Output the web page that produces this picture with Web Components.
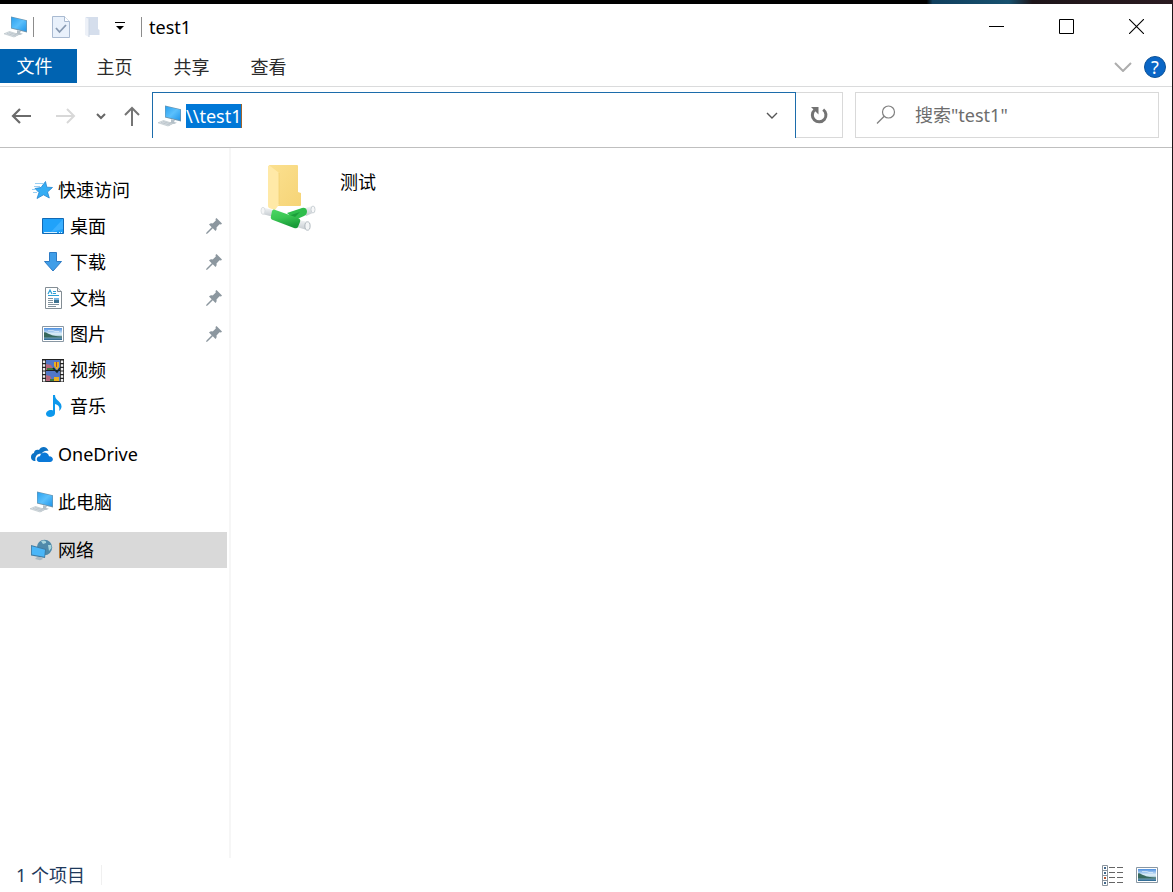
<!DOCTYPE html>
<html lang="zh-CN">
<head>
<meta charset="utf-8">
<title>test1</title>
<style>
html, body { height: 100%; margin: 0; }
body { background: #fff; color: #000; font: 18px/24px "Noto Sans", "Noto Sans CJK SC", sans-serif; overflow: hidden; }
</style>
</head>
<body>
<explorer-window></explorer-window>
<script>
const pc = `<svg viewBox="0 0 24 22" width="24" height="22"><defs><linearGradient id="s" x1="0" y1="0" x2="1" y2="1"><stop offset="0" stop-color="#2ba0ee"/><stop offset=".5" stop-color="#5bc0fc"/><stop offset="1" stop-color="#2196ea"/></linearGradient></defs><path d="M7 .5 23 4.200V16.500L7 12.500z" fill="#6d94ad"/><path d="M7.500 1.300 22.300 4.800v10.500L7.500 11.700z" fill="url(#s)"/><path d="M13 14.200l4 1-1 1.800 3 .8-3 1.200-5-1.300 2-.8z" fill="#b4c0c8"/><path d="M0 17.800 5.500 15.500 15 18.500l-5 2.500z" fill="#dbe1e5" stroke="#b4bfc5" stroke-width=".6"/><path d="m3 17.500 9 2.600M5 16.600l8.500 2.500" stroke="#a8b4bc" stroke-width=".6"/></svg>`;
const picture = `<svg viewBox="0 0 22 16" width="22" height="16"><defs><linearGradient id="g" x2="0" y2="1"><stop offset="0" stop-color="#4c8fe0"/><stop offset=".5" stop-color="#e2f2fa"/><stop offset=".7" stop-color="#9cc0d2"/><stop offset="1" stop-color="#24628e"/></linearGradient></defs><path d="M.5.5h21v15H.5z" fill="#fff" stroke="#8997a3"/><path d="M2 2h18v12H2z" fill="url(#g)"/><path d="M2 6.500c2-1 3 1 5 1.500s3 1.800 9 2.300l4 .2v1H2z" fill="#37695d"/><path d="M6 4.500h5l2 1h4" fill="none" stroke="#fff" opacity=".5"/></svg>`;
const icons = {
  pc, picture,
  check: `<svg viewBox="0 0 18 22" width="18" height="22"><path d="M.5.5h12l5 5v16H.5z" fill="#e9f1fb" stroke="#a9bad1"/><path d="M12.500.5v5h5" fill="#fff" stroke="#a9bad1"/><path d="m4 12 3.500 4 6.500-7" fill="none" stroke="#8799b1" stroke-width="1.800"/></svg>`,
  newfolder: `<svg viewBox="0 0 15 22" width="15" height="22"><path d="M1 1h12v12l1.500 1v5H1z" fill="#d5deec"/><path d="m0 1 4 2v18l-4-2z" fill="#edf1f8"/><path d="M4 3v18" stroke="#ccd6e4"/></svg>`,
  drop: `<svg viewBox="0 0 10 9" width="10" height="9"><path d="M0 .5h10" stroke="#000"/><path d="M1 4h8L5 8z"/></svg>`,
  min: `<svg viewBox="0 0 15 15" width="15" height="15"><path d="M0 7.500h15" stroke="#000"/></svg>`,
  max: `<svg viewBox="0 0 15 15" width="15" height="15"><path d="M.5.5h14v14H.5z" fill="none" stroke="#000"/></svg>`,
  close: `<svg viewBox="0 0 15 15" width="15" height="15"><path d="m0 0 15 15M15 0 0 15" stroke="#000" stroke-width="1.100"/></svg>`,
  expand: `<svg viewBox="0 0 18 10" width="18" height="10"><path d="m1 1 8 8 8-8" fill="none" stroke="#adadad" stroke-width="2"/></svg>`,
  back: `<svg viewBox="0 0 20 16" width="20" height="16"><path d="M20 8H2M9 1 2 8l7 7" fill="none" stroke="#6b6b6b" stroke-width="2.200"/></svg>`,
  forward: `<svg viewBox="0 0 20 16" width="20" height="16"><path d="M0 8h18M11 1l7 7-7 7" fill="none" stroke="#d8d8d8" stroke-width="2"/></svg>`,
  recent: `<svg viewBox="0 0 10 7" width="10" height="7"><path d="m1 1 4 4 4-4" fill="none" stroke="#666" stroke-width="2"/></svg>`,
  up: `<svg viewBox="0 0 16 20" width="16" height="20"><path d="M8 20V2M1 9l7-7 7 7" fill="none" stroke="#757575" stroke-width="2"/></svg>`,
  chev: `<svg viewBox="0 0 12 8" width="12" height="8"><path d="m1 1 5 5 5-5" fill="none" stroke="#555" stroke-width="1.400"/></svg>`,
  refresh: `<svg viewBox="0 0 18 18" width="18" height="18"><path d="M13.200 3.600A6.800 6.800 0 1 1 4.600 4" fill="none" stroke="#737373" stroke-width="3"/><path d="M1 1h7.500v7.500z" fill="#737373"/></svg>`,
  search: `<svg viewBox="0 0 20 20" width="20" height="20"><circle cx="12.500" cy="7" r="6" fill="none" stroke="#808080" stroke-width="1.200"/><path d="M8.200 11.300 1 18.500" stroke="#808080" stroke-width="1.300"/></svg>`,
  star: `<svg viewBox="0 0 22 20" width="22" height="20"><path d="m14.500 1.500 1.300 5.700 5.700.3-5 4.500 1.800 6-5.800-3.200L6 18.500l2-6-4-4 6-1z" fill="#35adf4" stroke="#2384cf" stroke-width=".8"/><path d="M4 3.500h8M3 6.500h6M1 9.500h4M2 12.500h4" stroke="#8fc9f0" stroke-width=".9"/></svg>`,
  desktop: `<svg viewBox="0 0 22 16" width="22" height="16"><path d="M.5.5h21v15H.5z" fill="#20a2fa" stroke="#1269b4"/><path d="M21 1v10L9 14z" fill="#3bb0ff"/><path d="M2 14.500h13M17 14.500h1M19 14.500h1" stroke="#d8f1ff"/></svg>`,
  download: `<svg viewBox="0 0 18 20" width="18" height="20"><path d="M5.500.5h7v9h5L9 19 .5 9.500h5z" fill="#409ee8" stroke="#2d7bc4"/></svg>`,
  document: `<svg viewBox="0 0 17 22" width="17" height="22"><path d="M.5.500h12l4 4v17H.5z" fill="#fff" stroke="#838d94"/><path d="M12.500.500v4h4" fill="#edf0f2" stroke="#838d94"/><path d="m3 7 2-4 2 4M8 4.500h3M8 6.500h3M3 8.500h11" fill="none" stroke="#2fa0d5" stroke-width="1.200"/><path d="M3 11.500h5M3 13.500h5M3 15.500h5M3 17.500h11M3 19.500h8" stroke="#83939e"/><path d="M9 11h5v5H9z" fill="#3e7290"/><path d="M9 11h5v2H9z" fill="#77b7e3"/></svg>`,
  video: `<svg viewBox="0 0 22 23" width="22" height="23"><path d="M0 0h22v23H0z" fill="#222"/><path d="M4 1h14v10H4zM4 12h14v10H4z" fill="#5278c8"/><path d="M4 5l5 1 3 5H4zM4 16l4 1 3 5H4z" fill="#b5687c"/><path d="M5 9h8v2H5zM8 20h9v2H8z" fill="#397b43"/><path d="M12 3h5v5l-2 3-3-4zM12 18h5v4h-5z" fill="#e8b021"/><path d="M14.500 3v5" stroke="#b24830"/><path d="m11 9 4 4 3-4" fill="none" stroke="#152a2b" stroke-width="1.500"/><path d="M2 1.500V23M20 1.500V23" stroke="#eee" stroke-width="2.400" stroke-dasharray="2.500 1.200"/></svg>`,
  music: `<svg viewBox="0 0 17 22" width="17" height="22"><path d="M8 0h2c0 6 7 6 6.500 12-.2 2-1.500 3-2.500 4 1-4 0-6-4-7v9c0 5-9 5-9 1 0-3 4-5 7-3.500z" fill="#0d98ec"/></svg>`,
  onedrive: `<svg viewBox="0 0 22 15" width="22" height="15"><path d="M4.500 14C1 14 0 12 0 10s1-3.500 3-4c0-3 3-4 5-3 2-4 8-4 9.500 1-3-1-6 .5-7 3C7 6 3.500 9 4.500 14z" fill="#0c72c5"/><path d="M8.500 15C4.500 15 5 9 9 9.200c1-5 8-5 9 0 5 0 5 5.800 1 5.800z" fill="#0a79d8"/></svg>`,
  network: `<svg viewBox="0 0 22 22" width="22" height="22"><circle cx="13.500" cy="8.500" r="7.700" fill="#4f8aaa"/><path d="M10 2c3-1.500 6 0 5 2l-3 1zM17 6l3 0 .5 3-2.500 3z" fill="#a8d5dd"/><path d="m0 6 15 4-1 9-14-2.500z" fill="#3f7ca4"/><path d="m.8 7.200 13.200 3.600-.7 7L.8 15.500z" fill="#4ab6f8"/><path d="M6 18h4l2 2-3 1.200L4 20z" fill="#a8b9c3"/></svg>`,
  pin: `<svg viewBox="0 0 16 16" width="16" height="16"><path d="m9.500 1 1-1L16 5.500l-1 1-1.500-.3-3 3.300c.4 1.500 0 2.500-1 3.500L6.800 10.300 1.500 15.500 0 16l.5-1.500 5.200-5.300L3 6.500c1-1 2.300-1.400 3.700-1L9.800 2.500z" fill="#8c979f"/></svg>`,
  share: `<svg viewBox="0 0 56 68" width="56" height="68"><defs><linearGradient id="f" x2="1" y2="1"><stop offset="0" stop-color="#fbe08f"/><stop offset="1" stop-color="#f6d477"/></linearGradient><linearGradient id="t" x2=".3" y2="1"><stop offset="0" stop-color="#4bd764"/><stop offset=".5" stop-color="#3ac653"/><stop offset="1" stop-color="#189b38"/></linearGradient><linearGradient id="w" x2="0" y2="1"><stop offset="0" stop-color="#f4f6f7"/><stop offset="1" stop-color="#c3c9ce"/></linearGradient></defs><path d="M9 1h28q1 0 1 1v26l3 1v12q0 1-1 1H18z" fill="url(#f)"/><path d="M8 2q1-1 2 0l8 6q1 1 1 2v29q0 2-1 3l-3 4-6-2q-1-1-1-2z" fill="#ffe9a7"/><path d="M19 9v31" stroke="#f2d071" stroke-width=".8"/><path d="m3 43.500 12 3-3 6-10-2.500z" fill="url(#w)"/><ellipse cx="3" cy="46.800" rx="2" ry="3.500" fill="#f4f5f6" stroke="#d3d8dc" stroke-width=".8"/><path d="m42 45 10-3 3 6-9 4z" fill="url(#w)"/><ellipse cx="53" cy="45.500" rx="2" ry="3.500" fill="#f7f8f9" stroke="#bfc6cc" stroke-width=".8"/><path d="m27 49 15-5q4-1 5 3 0 4-3 5l-9 4z" fill="#2fbd4c"/><path d="m28 52 12-4-6 6z" fill="#1c9e3b"/><path d="m36 55.500 12 2.500-1 8-12-3.500z" fill="url(#w)"/><ellipse cx="47.500" cy="62" rx="2.600" ry="4.200" fill="#f3f5f6" stroke="#a9b2b9" stroke-width=".9"/><path d="M14 45.500 38 54q3 1 2 4l-2 5q-1 2-4 1L13 56q-3-1-2-4l1-5q1-2 2-1.500z" fill="url(#t)"/></svg>`,
  details: `<svg viewBox="0 0 22 21" width="22" height="21"><path d="M.5.5h5v20h-5zM0 5.500h6M0 10.500h6M0 15.500h6" fill="#fff" stroke="#8a949c"/><path d="M2 3h2M2 8h2M2 18h2" stroke="#42698c" stroke-width="2"/><path d="M2 13h2" stroke="#b2552e" stroke-width="2"/><path d="M7 2.500h6M15 2.500h6M7 7.500h6M15 7.500h6M7 12.500h6M15 12.500h6M7 17.500h6M15 17.500h6" stroke="#656565"/></svg>`
};

function define(name, css, html, setup) {
  const template = document.createElement("template");
  template.innerHTML = `<style>*{box-sizing:border-box}button{font:inherit;color:inherit;background:none;border:0;padding:0;display:flex;align-items:center;justify-content:center}input{font:inherit;border:0;outline:0;padding:0}${css}</style>${html}`;
  customElements.define(name, class extends HTMLElement {
    connectedCallback() {
      if (this.shadowRoot) return;
      this.attachShadow({ mode: "open" }).append(template.content.cloneNode(true));
      if (setup) setup(this, this.shadowRoot);
    }
  });
}

define("ui-icon", `:host{display:inline-flex;flex:none;align-items:center;justify-content:center}svg{display:block}`, `<span></span>`,
  (el, root) => { root.querySelector("span").innerHTML = icons[el.getAttribute("name")]; });

define("title-bar", `
:host{display:flex;height:45px;align-items:center;padding-left:4px}
.sep{width:1px;height:20px;background:#8c8c8c}
.tools{display:flex;align-items:center;gap:15px;margin:0 16px 0 23px}
.tools::before{content:none}
ui-icon + .sep{margin-left:5px}
.tools{margin-left:18px}
h1{font:inherit;margin:0 auto 0 7px}
.win{width:70px;height:45px}`,
`<ui-icon name="pc"></ui-icon><span class="sep"></span>
<div class="tools"><button aria-label="属性"><ui-icon name="check"></ui-icon></button><button aria-label="新建文件夹"><ui-icon name="newfolder"></ui-icon></button><button aria-label="自定义"><ui-icon name="drop"></ui-icon></button></div>
<span class="sep"></span><h1><slot></slot></h1>
<button class="win" aria-label="最小化"><ui-icon name="min"></ui-icon></button><button class="win" aria-label="最大化"><ui-icon name="max"></ui-icon></button><button class="win" aria-label="关闭"><ui-icon name="close"></ui-icon></button>`);

define("ribbon-tab", `:host{display:block}button{width:77px;height:36px;color:#2b2b2b;padding-right:2px}:host([primary]) button{height:34px;background:#0063b1;color:#fff;padding-right:8px}`, `<button><slot></slot></button>`);

define("ribbon-bar", `
:host{display:flex;height:38px;align-items:flex-start;border-bottom:1px solid #dadbdc;padding-right:6px}
.end{margin-left:auto;display:flex;align-items:center;gap:12px;height:36px}
.help{width:22px;height:22px;border-radius:50%;background:#0a66c6;border:1px solid #0d5298;color:#fff;line-height:20px}`,
`<slot></slot><div class="end"><button aria-label="展开功能区"><ui-icon name="expand"></ui-icon></button><button class="help">?</button></div>`);

define("address-bar", `
:host{display:flex;height:61px;align-items:flex-start;padding:5px 13px 0 0;border-bottom:1px solid #bfbfbf}
nav{display:grid;grid-template-columns:42px 48px 22px 40px;width:152px;height:48px}
.path{flex:1;display:flex;align-items:center;height:46px;border:1px solid #1c6cab;border-bottom:0;padding:0 17px 0 5px;gap:4px;min-width:0}
.path input{field-sizing:content;background:#0078d7;color:#fff;height:24px;border-right:1px solid #a0652e}
.path button{margin-left:auto}
.refresh{width:47px;height:46px;border:1px solid #d9d9d9;border-left:0}
.search{display:flex;align-items:center;gap:19px;width:304px;height:46px;margin-left:12px;border:1px solid #d9d9d9;padding:0 20px}
.search input{flex:1;min-width:0;height:24px}
.search input::placeholder{color:#6d6d6d;opacity:1}`,
`<nav><button aria-label="后退"><ui-icon name="back"></ui-icon></button><button aria-label="前进"><ui-icon name="forward"></ui-icon></button><button aria-label="最近"><ui-icon name="recent"></ui-icon></button><button aria-label="向上"><ui-icon name="up"></ui-icon></button></nav>
<div class="path"><ui-icon name="pc"></ui-icon><input aria-label="地址" spellcheck="false"><button aria-label="历史"><ui-icon name="chev"></ui-icon></button></div>
<button class="refresh" aria-label="刷新"><ui-icon name="refresh"></ui-icon></button>
<label class="search"><ui-icon name="search"></ui-icon><input type="text" aria-label="搜索" placeholder='搜索"test1"'></label>`,
(el, root) => { root.querySelector(".path input").value = el.getAttribute("path"); });

define("nav-item", `
:host{display:block}
a{display:flex;align-items:center;height:36px;padding:0 5px 0 30px;color:inherit;text-decoration:none}
:host([child]) a{padding-left:41px}
.icon{width:24px;margin-right:4px}:host([child]) .icon{margin-right:5px}
:host([current]) a{background:#d9d9d9}
.pin{display:none;margin-left:auto}:host([pinned]) .pin{display:block}`,
`<a href="#"><ui-icon class="icon"></ui-icon><slot></slot><ui-icon class="pin" name="pin"></ui-icon></a>`,
(el, root) => {
  const old = root.querySelector(".icon"), icon = document.createElement("ui-icon");
  icon.className = "icon"; icon.setAttribute("name", el.getAttribute("icon")); old.replaceWith(icon);
});

define("nav-pane", `:host{display:flex;flex-direction:column;gap:12px;width:231px;flex:none;padding:24px 2px 0 0;border-right:2px solid #f6f6f6}`,
`<section><nav-item icon="star">快速访问</nav-item><nav-item child pinned icon="desktop">桌面</nav-item><nav-item child pinned icon="download">下载</nav-item><nav-item child pinned icon="document">文档</nav-item><nav-item child pinned icon="picture">图片</nav-item><nav-item child icon="video">视频</nav-item><nav-item child icon="music">音乐</nav-item></section>
<nav-item icon="onedrive">OneDrive</nav-item><nav-item icon="pc">此电脑</nav-item><nav-item icon="network" current>网络</nav-item>`);

define("share-tile", `:host{display:flex;gap:24px}span{padding-top:6px}`, `<ui-icon name="share"></ui-icon><span><slot></slot></span>`);

define("status-bar", `
:host{display:flex;align-items:center;height:34px;padding:0 14px 0 16px;color:#1e395b}
.count{padding-right:16px;border-right:1px solid #f0f0f0;line-height:20px}
.views{display:flex;gap:12px;margin-left:auto}`,
`<span class="count"><slot></slot></span><div class="views"><button aria-label="详细信息"><ui-icon name="details"></ui-icon></button><button aria-label="大图标"><ui-icon name="picture"></ui-icon></button></div>`);

define("explorer-window", `
:host{display:flex;flex-direction:column;height:100vh;border-right:1px solid #1c1517}
.backdrop{height:4px;margin-right:-1px;flex:none;background:linear-gradient(90deg,#000 79%,#103f5e 79.500%,#17516f 86%,#1e1519 88%,#2a1a20)}
title-bar,ribbon-bar,address-bar,status-bar{flex:none}
title-bar{padding-right:1px}
.body{display:flex;flex:1;min-height:0}
main{flex:1;padding:16px 29px}`,
`<div class="backdrop"></div><title-bar>test1</title-bar>
<ribbon-bar><ribbon-tab primary>文件</ribbon-tab><ribbon-tab>主页</ribbon-tab><ribbon-tab>共享</ribbon-tab><ribbon-tab>查看</ribbon-tab></ribbon-bar>
<address-bar path="\\\\test1"></address-bar>
<div class="body"><nav-pane></nav-pane><main><share-tile>测试</share-tile></main></div>
<status-bar>1 个项目</status-bar>`);
</script>
</body>
</html>
